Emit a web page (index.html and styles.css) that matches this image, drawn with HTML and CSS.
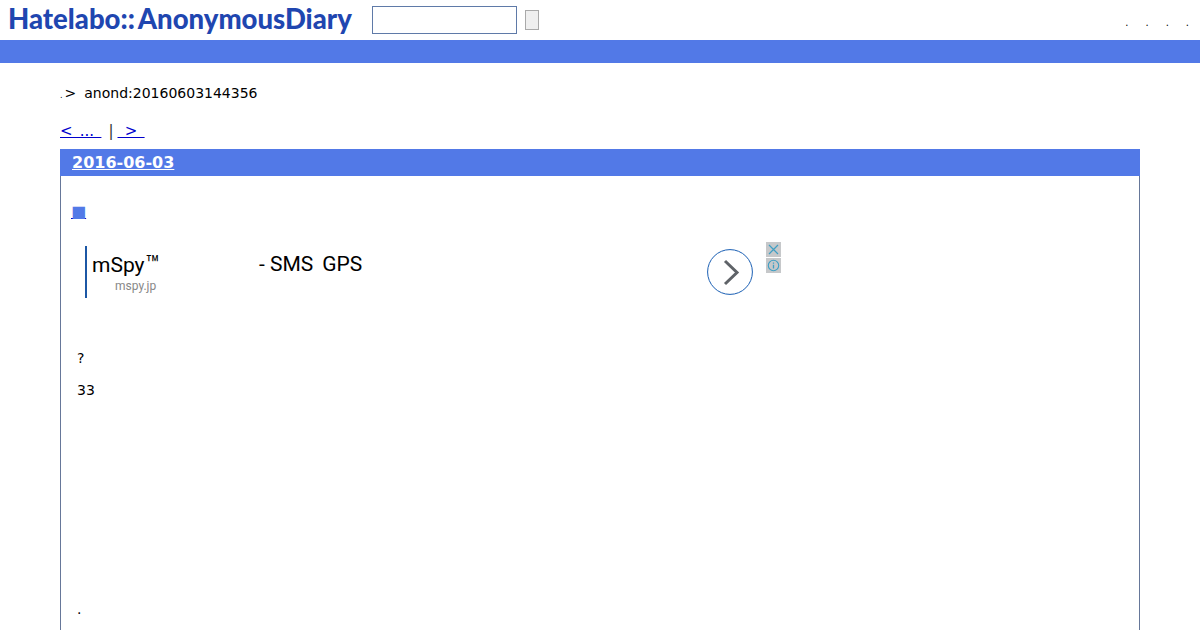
FILE: index.html
```html
<!DOCTYPE html>
<html lang="ja">
<head>
    <meta charset="UTF-8">
    <title>Hatelabo::AnonymousDiary</title>
    <link rel="stylesheet" href="styles.css">
</head>
<body>
    <div class="header">
        <a class="logo">Hatelabo::<span class="logo-tail">AnonymousDiary</span></a>
        <input class="search-input" type="text">
        <button class="search-button"></button>
        <div class="user-links">
            <span>.</span>
            <span>.</span>
            <span>.</span>
            <span>.</span>
        </div>
    </div>
    <div class="bar"></div>

    <div class="main">
        <div class="breadcrumb"><span class="dot">.</span><span class="gt">&gt;</span><span>anond:20160603144356</span></div>

        <div class="pager">
            <a href="#">&lt; ... </a>
            <span class="sep">|</span>
            <a href="#"> &gt; </a>
        </div>

        <div class="day">
            <h2 class="day-title"><a href="#">2016-06-03</a></h2>
            <div class="day-body">
                <a class="sanchor-link" href="#"><span class="sanchor">■</span></a>

                <div class="ad">
                    <div class="ad-text">
                        <div class="ad-title"><span class="ad-name">mSpy<span class="tm">™</span></span><span>- SMS<span class="gap"></span>GPS</span></div>
                        <div class="ad-url">mspy.jp</div>
                    </div>
                    <div class="ad-arrow">
                        <svg width="46" height="46" viewBox="0 0 46 46">
                            <circle cx="23" cy="23" r="22.4" fill="#fff" stroke="#1a5fb4" stroke-width="1"/>
                            <path d="M18 12 L30 23.5 L18 35" fill="none" stroke="#5f6368" stroke-width="3"/>
                        </svg>
                    </div>
                    <div class="ad-choices">
                        <div class="ad-icon">
                            <svg width="15" height="15" viewBox="0 0 15 15">
                                <path d="M3 3 L12 12 M12 3 L3 12" stroke="#3f9fc4" stroke-width="1.2" fill="none"/>
                            </svg>
                        </div>
                        <div class="ad-icon">
                            <svg width="15" height="15" viewBox="0 0 15 15">
                                <circle cx="7.5" cy="7.5" r="5.2" fill="none" stroke="#3f9fc4" stroke-width="1.1"/>
                                <path d="M7.5 4.5 V5.8 M7.5 6.8 V10.5" stroke="#3f9fc4" stroke-width="1.3" fill="none"/>
                            </svg>
                        </div>
                    </div>
                </div>

                <p class="line first">?</p>
                <p class="line">33</p>
                <p class="line last">.</p>
            </div>
        </div>
    </div>
</body>
</html>
```

FILE: styles.css
```css
html, body {
    height: 630px;
    overflow: hidden;
}
body {
    margin: 0;
    font-family: "DejaVu Sans", sans-serif;
    font-size: 14px;
    color: #000;
    background-color: #fff;
}
a {
    color: #0000cc;
}
.header {
    display: flex;
    align-items: center;
    height: 40px;
    padding-left: 8px;
}
.logo {
    width: 364px;
    margin-top: -2px;
    font-family: Lato, sans-serif;
    font-weight: 900;
    font-size: 27.5px;
    line-height: 40px;
    color: #1f46b0;
    white-space: nowrap;
}
.logo-tail {
    margin-left: 3px;
}
.search-input {
    box-sizing: border-box;
    width: 145px;
    height: 28px;
    margin: 0;
    padding: 0;
    background-color: #fff;
    border: 1px solid #5f7aa8;
}
.search-button {
    box-sizing: border-box;
    width: 14px;
    height: 20px;
    margin: 0 0 0 8px;
    padding: 0;
    background-color: #efefef;
    border: 1px solid #a9a9a9;
}
.user-links {
    display: flex;
    gap: 17px;
    margin-left: auto;
    padding-top: 4px;
    padding-right: 11px;
    font-size: 10px;
}
.bar {
    height: 23px;
    background-color: #5279e7;
}
.main {
    padding: 22px 60px 0;
}
.breadcrumb {
    display: flex;
    align-items: baseline;
    height: 17px;
    line-height: 17px;
}
.breadcrumb .dot {
    font-size: 8px;
}
.breadcrumb .gt {
    margin: 0 8px 0 2px;
}
.pager {
    display: flex;
    gap: 7px;
    margin-top: 20px;
    height: 19px;
    font-size: 15px;
    line-height: 19px;
    white-space: pre;
    word-spacing: 2.5px;
}
.pager .sep {
    margin-right: -3px;
    color: #333;
}
.day {
    height: 481px;
    margin-top: 8px;
    border-left: 1px solid #667799;
    border-right: 1px solid #667799;
}
.day-title {
    margin: 0 -1px;
    padding-left: 12px;
    height: 27px;
    font-size: 16px;
    line-height: 27px;
    background-color: #5279e7;
}
.day-title a {
    color: #fff;
}
.day-body {
    padding: 25px 16px 0 10px;
}
.sanchor-link {
    display: block;
    width: 16px;
    font-size: 16px;
    line-height: 22px;
}
.sanchor {
    color: #5279e7;
}
.ad {
    position: relative;
    display: flex;
    width: 696px;
    height: 60px;
    margin-top: 15px;
    padding-left: 14px;
    font-family: Roboto, sans-serif;
}
.ad-text {
    align-self: flex-end;
    box-sizing: border-box;
    width: 622px;
    height: 52px;
    padding-left: 5px;
    border-left: 2px solid #1c57a5;
}
.ad-title {
    display: flex;
    font-size: 21px;
    line-height: 36px;
}
.ad-name {
    width: 167px;
}
.tm {
    margin-left: 1px;
    font-size: 24px;
}
.gap {
    display: inline-block;
    width: 9px;
}
.ad-url {
    margin-top: -2px;
    padding-left: 23px;
    font-size: 12px;
    line-height: 11px;
    color: #888;
}
.ad-arrow {
    margin-top: 11px;
    line-height: 0;
}
.ad-choices {
    position: absolute;
    top: 4px;
    left: 695px;
    line-height: 0;
}
.ad-icon {
    width: 15px;
    height: 15px;
    margin-bottom: 1px;
    background-color: #c6c8ca;
}
.line {
    margin: 0 0 0 6px;
    line-height: 17px;
}
.line.first {
    margin-top: 52px;
}
.line + .line {
    margin-top: 15px;
}
.line.last {
    margin-top: 202px;
}
```
